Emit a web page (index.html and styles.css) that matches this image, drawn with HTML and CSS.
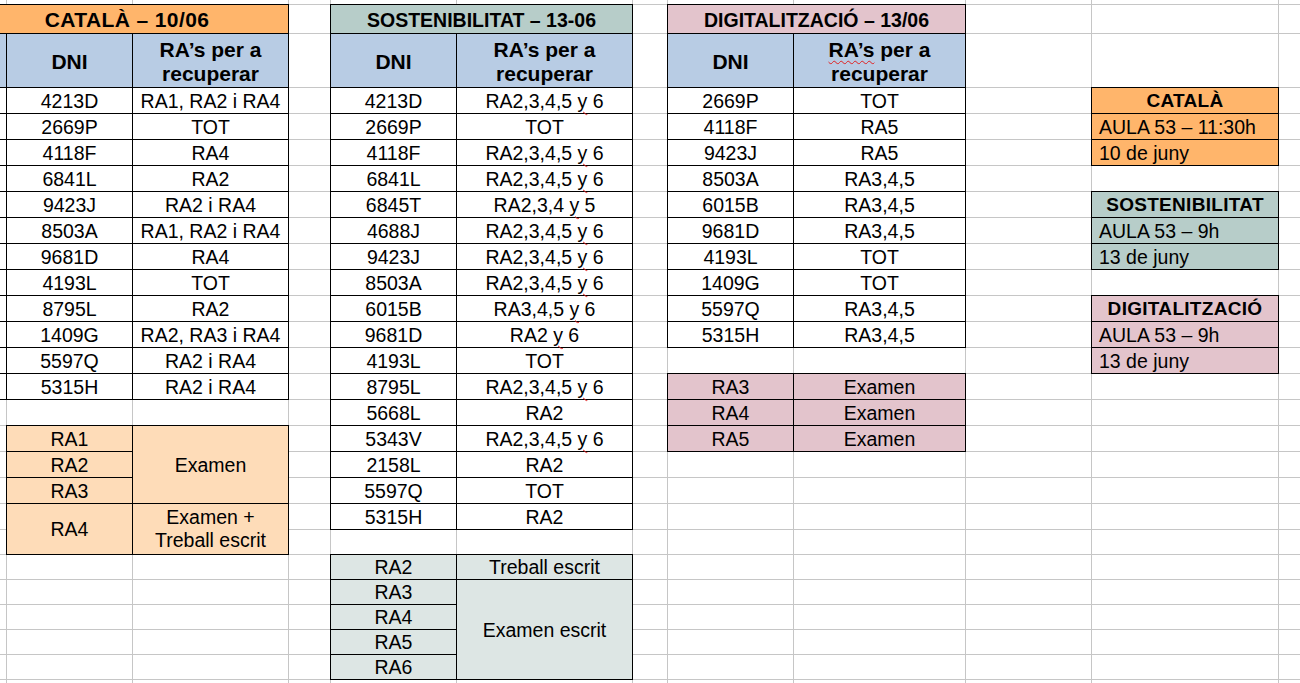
FILE: index.html
```html
<!DOCTYPE html>
<html lang="ca">
<head>
<meta charset="utf-8">
<title>Recuperacions</title>
<link rel="stylesheet" href="styles.css">
</head>
<body>
<div class="page">
  <div class="sheet">

    <!-- CATALÀ -->
    <div class="tbl noleft t-cat">
      <div class="c title s3 orange big">CATALÀ – 10/06</div>
      <div class="c sub"></div>
      <div class="c sub">DNI</div>
      <div class="c sub">RA’s per a<br>recuperar</div>
      <div class="c"></div><div class="c">4213D</div><div class="c">RA1, RA2 i RA4</div>
      <div class="c"></div><div class="c">2669P</div><div class="c">TOT</div>
      <div class="c"></div><div class="c">4118F</div><div class="c">RA4</div>
      <div class="c"></div><div class="c">6841L</div><div class="c">RA2</div>
      <div class="c"></div><div class="c">9423J</div><div class="c">RA2 i RA4</div>
      <div class="c"></div><div class="c">8503A</div><div class="c">RA1, RA2 i RA4</div>
      <div class="c"></div><div class="c">9681D</div><div class="c">RA4</div>
      <div class="c"></div><div class="c">4193L</div><div class="c">TOT</div>
      <div class="c"></div><div class="c">8795L</div><div class="c">RA2</div>
      <div class="c"></div><div class="c">1409G</div><div class="c">RA2, RA3 i RA4</div>
      <div class="c"></div><div class="c">5597Q</div><div class="c">RA2 i RA4</div>
      <div class="c"></div><div class="c">5315H</div><div class="c">RA2 i RA4</div>
    </div>

    <div class="tbl t-cat-ra light-orange">
      <div class="c">RA1</div>
      <div class="c r3">Examen</div>
      <div class="c">RA2</div>
      <div class="c">RA3</div>
      <div class="c">RA4</div>
      <div class="c two">Examen +<br>Treball escrit</div>
    </div>

    <!-- SOSTENIBILITAT -->
    <div class="tbl t-sos">
      <div class="c title s2 green">SOSTENIBILITAT – 13-06</div>
      <div class="c sub">DNI</div>
      <div class="c sub">RA’s per a<br>recuperar</div>
      <div class="c">4213D</div><div class="c"><span>RA2,3,4,5 <span class="sp">y</span> 6</span></div>
      <div class="c">2669P</div><div class="c">TOT</div>
      <div class="c">4118F</div><div class="c"><span>RA2,3,4,5 <span class="sp">y</span> 6</span></div>
      <div class="c">6841L</div><div class="c"><span>RA2,3,4,5 <span class="sp">y</span> 6</span></div>
      <div class="c">6845T</div><div class="c"><span>RA2,3,4 <span class="sp">y</span> 5</span></div>
      <div class="c">4688J</div><div class="c"><span>RA2,3,4,5 <span class="sp">y</span> 6</span></div>
      <div class="c">9423J</div><div class="c"><span>RA2,3,4,5 <span class="sp">y</span> 6</span></div>
      <div class="c">8503A</div><div class="c"><span>RA2,3,4,5 <span class="sp">y</span> 6</span></div>
      <div class="c">6015B</div><div class="c"><span>RA3,4,5 <span class="sp">y</span> 6</span></div>
      <div class="c">9681D</div><div class="c"><span>RA2 <span class="sp">y</span> 6</span></div>
      <div class="c">4193L</div><div class="c">TOT</div>
      <div class="c">8795L</div><div class="c"><span>RA2,3,4,5 <span class="sp">y</span> 6</span></div>
      <div class="c">5668L</div><div class="c">RA2</div>
      <div class="c">5343V</div><div class="c"><span>RA2,3,4,5 <span class="sp">y</span> 6</span></div>
      <div class="c">2158L</div><div class="c">RA2</div>
      <div class="c">5597Q</div><div class="c">TOT</div>
      <div class="c">5315H</div><div class="c">RA2</div>
    </div>

    <div class="tbl t-sos-ra light-green">
      <div class="c">RA2</div>
      <div class="c">Treball escrit</div>
      <div class="c">RA3</div>
      <div class="c r4">Examen escrit</div>
      <div class="c">RA4</div>
      <div class="c">RA5</div>
      <div class="c">RA6</div>
    </div>

    <!-- DIGITALITZACIÓ -->
    <div class="tbl t-dig">
      <div class="c title s2 pink">DIGITALITZACIÓ – 13/06</div>
      <div class="c sub">DNI</div>
      <div class="c sub"><span><span class="sp">RA’s</span> per a<br>recuperar</span></div>
      <div class="c">2669P</div><div class="c">TOT</div>
      <div class="c">4118F</div><div class="c">RA5</div>
      <div class="c">9423J</div><div class="c">RA5</div>
      <div class="c">8503A</div><div class="c">RA3,4,5</div>
      <div class="c">6015B</div><div class="c">RA3,4,5</div>
      <div class="c">9681D</div><div class="c">RA3,4,5</div>
      <div class="c">4193L</div><div class="c">TOT</div>
      <div class="c">1409G</div><div class="c">TOT</div>
      <div class="c">5597Q</div><div class="c">RA3,4,5</div>
      <div class="c">5315H</div><div class="c">RA3,4,5</div>
    </div>

    <div class="tbl t-dig-ra pink">
      <div class="c">RA3</div><div class="c">Examen</div>
      <div class="c">RA4</div><div class="c">Examen</div>
      <div class="c">RA5</div><div class="c">Examen</div>
    </div>

    <!-- Info boxes -->
    <div class="tbl info i-cat orange">
      <div class="c ihead">CATALÀ</div>
      <div class="c left">AULA 53 – 11:30h</div>
      <div class="c left">10 de juny</div>
    </div>
    <div class="tbl info i-sos green">
      <div class="c ihead">SOSTENIBILITAT</div>
      <div class="c left">AULA 53 – 9h</div>
      <div class="c left">13 de juny</div>
    </div>
    <div class="tbl info i-dig pink">
      <div class="c ihead">DIGITALITZACIÓ</div>
      <div class="c left">AULA 53 – 9h</div>
      <div class="c left">13 de juny</div>
    </div>

  </div>
</div>
</body>
</html>
```

FILE: styles.css
```css
* { box-sizing: border-box; }

html, body {
  margin: 0;
  padding: 0;
  background: #fff;
}

body {
  font-family: "Liberation Sans", Arial, sans-serif;
  color: #000;
}

.page {
  --g: #c6c6c6;
  width: 1300px;
  height: 683px;
  overflow: hidden;
  background:
    linear-gradient(var(--g), var(--g)) 6px 0 / 1px 100% no-repeat,
    linear-gradient(var(--g), var(--g)) 132px 0 / 1px 100% no-repeat,
    linear-gradient(var(--g), var(--g)) 288px 0 / 1px 100% no-repeat,
    linear-gradient(var(--g), var(--g)) 330px 0 / 1px 100% no-repeat,
    linear-gradient(var(--g), var(--g)) 456px 0 / 1px 100% no-repeat,
    linear-gradient(var(--g), var(--g)) 632px 0 / 1px 100% no-repeat,
    linear-gradient(var(--g), var(--g)) 667px 0 / 1px 100% no-repeat,
    linear-gradient(var(--g), var(--g)) 793px 0 / 1px 100% no-repeat,
    linear-gradient(var(--g), var(--g)) 965px 0 / 1px 100% no-repeat,
    linear-gradient(var(--g), var(--g)) 1091px 0 / 1px 100% no-repeat,
    linear-gradient(var(--g), var(--g)) 1278px 0 / 1px 100% no-repeat,
    linear-gradient(var(--g), var(--g)) 0 4px / 100% 1px no-repeat,
    linear-gradient(var(--g), var(--g)) 0 33px / 100% 1px no-repeat,
    linear-gradient(var(--g), var(--g)) 0 87px / 100% 1px no-repeat,
    repeating-linear-gradient(to bottom, transparent 0 25px, var(--g) 25px 26px) 0 88px / 100% 442px no-repeat,
    repeating-linear-gradient(to bottom, transparent 0 24px, var(--g) 24px 25px) 0 530px / 100% 153px no-repeat,
    #fff;
}

.sheet {
  display: grid;
  margin-left: -34px;
  width: 1334px;
  height: 683px;
  grid-template-columns: 41px 126px 156px 42px 126px 176px 35px 126px 172px 126px 187px 1fr;
  grid-template-rows: 5px 29px 54px repeat(17, 26px) repeat(6, 25px) 1fr;
}

/* generic bordered block */
.tbl {
  display: grid;
  border-top: 1px solid #000;
  border-left: 1px solid #000;
  margin: -1px 0 0 -1px;
  background: #fff;
}
.tbl.noleft {
  border-left: 0;
  margin-left: 0;
}

.c {
  border-right: 1px solid #000;
  border-bottom: 1px solid #000;
  display: flex;
  align-items: center;
  justify-content: center;
  text-align: center;
  font-size: 19.5px;
  line-height: 22px;
  white-space: nowrap;
}

.c.left {
  justify-content: flex-start;
  padding-left: 7px;
}

.title {
  font-weight: bold;
  font-size: 19.5px;
  padding-top: 1px;
}
.title.big {
  font-size: 21px;
  letter-spacing: 0.4px;
}

.sub {
  background: #b8cce4;
  font-weight: bold;
  font-size: 21px;
  line-height: 24px;
  padding-top: 2px;
}

.ihead {
  font-weight: bold;
  font-size: 19px;
  letter-spacing: 0.3px;
}

.two {
  line-height: 23px;
}

.sp {
  text-decoration: underline wavy #e02020;
  text-decoration-thickness: 1px;
  text-underline-offset: 3px;
}

/* spans */
.s2 { grid-column: span 2; }
.s3 { grid-column: span 3; }
.r3 { grid-row: span 3; }
.r4 { grid-row: span 4; }

/* colours */
.orange { background: #ffb56b; }
.light-orange { background: #fedcb8; }
.green { background: #b7cdc9; }
.light-green { background: #dde6e4; }
.pink { background: #e3c4cc; }

/* placement on the sheet */
.t-cat {
  grid-column: 1 / 4;
  grid-row: 2 / 16;
  grid-template-columns: 41px 126px 156px;
  grid-template-rows: 29px 54px repeat(12, 26px);
}
.t-cat-ra {
  grid-column: 2 / 4;
  grid-row: 17 / 22;
  grid-template-columns: 126px 156px;
  grid-template-rows: 26px 26px 26px 51px;
}
.t-sos {
  grid-column: 5 / 7;
  grid-row: 2 / 21;
  grid-template-columns: 126px 176px;
  grid-template-rows: 29px 54px repeat(17, 26px);
}
.t-sos-ra {
  grid-column: 5 / 7;
  grid-row: 22 / 27;
  grid-template-columns: 126px 176px;
  grid-template-rows: repeat(5, 25px);
}
.t-dig {
  grid-column: 8 / 10;
  grid-row: 2 / 14;
  grid-template-columns: 126px 172px;
  grid-template-rows: 29px 54px repeat(10, 26px);
}
.t-dig-ra {
  grid-column: 8 / 10;
  grid-row: 15 / 18;
  grid-template-columns: 126px 172px;
  grid-template-rows: repeat(3, 26px);
}
.info {
  grid-column: 11 / 12;
  grid-template-columns: 187px;
  grid-template-rows: repeat(3, 26px);
}
.i-cat { grid-row: 4 / 7; }
.i-sos { grid-row: 8 / 11; }
.i-dig { grid-row: 12 / 15; }
```
